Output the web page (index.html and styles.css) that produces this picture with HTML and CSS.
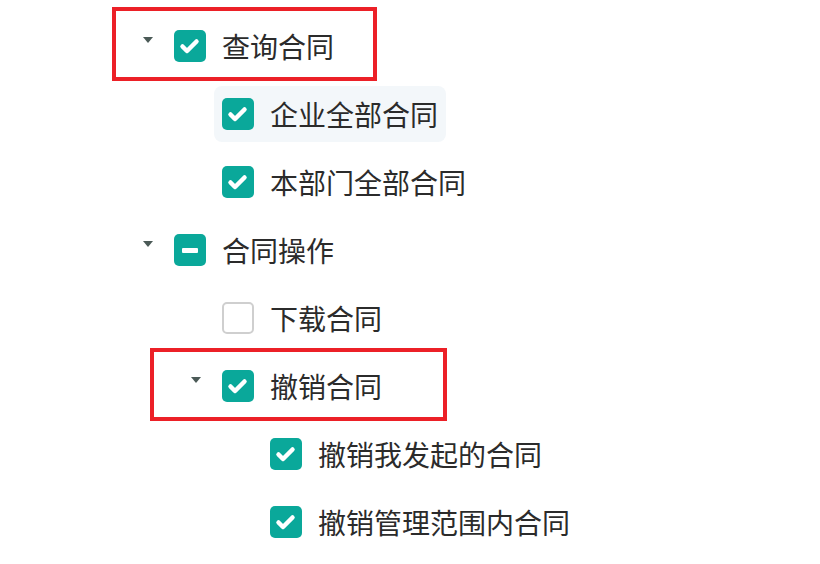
FILE: index.html
```html
<!DOCTYPE html>
<html lang="zh-CN">
<head>
    <meta charset="UTF-8">
    <meta name="viewport" content="width=device-width, initial-scale=1.0">
    <title>合同权限</title>
    <link rel="stylesheet" href="styles.css">
</head>
<body>
    <div class="tree">
        <div class="node">
            <span class="switcher"><i class="caret"></i></span>
            <div class="node-content">
                <span class="check checked"><svg viewBox="0 0 32 32"><path d="M8.5 16.5l4.5 4.5 9.5-9.5"/></svg></span>
                <span class="title">查询合同</span>
            </div>
        </div>
        <div class="node">
            <span class="indent"></span>
            <span class="switcher"></span>
            <div class="node-content active">
                <span class="check checked"><svg viewBox="0 0 32 32"><path d="M8.5 16.5l4.5 4.5 9.5-9.5"/></svg></span>
                <span class="title">企业全部合同</span>
            </div>
        </div>
        <div class="node">
            <span class="indent"></span>
            <span class="switcher"></span>
            <div class="node-content">
                <span class="check checked"><svg viewBox="0 0 32 32"><path d="M8.5 16.5l4.5 4.5 9.5-9.5"/></svg></span>
                <span class="title">本部门全部合同</span>
            </div>
        </div>
        <div class="node">
            <span class="switcher"><i class="caret"></i></span>
            <div class="node-content">
                <span class="check half"></span>
                <span class="title">合同操作</span>
            </div>
        </div>
        <div class="node">
            <span class="indent"></span>
            <span class="switcher"></span>
            <div class="node-content">
                <span class="check"></span>
                <span class="title">下载合同</span>
            </div>
        </div>
        <div class="node">
            <span class="indent"></span>
            <span class="switcher"><i class="caret"></i></span>
            <div class="node-content">
                <span class="check checked"><svg viewBox="0 0 32 32"><path d="M8.5 16.5l4.5 4.5 9.5-9.5"/></svg></span>
                <span class="title">撤销合同</span>
            </div>
        </div>
        <div class="node">
            <span class="indent"></span>
            <span class="indent"></span>
            <span class="switcher"></span>
            <div class="node-content">
                <span class="check checked"><svg viewBox="0 0 32 32"><path d="M8.5 16.5l4.5 4.5 9.5-9.5"/></svg></span>
                <span class="title">撤销我发起的合同</span>
            </div>
        </div>
        <div class="node">
            <span class="indent"></span>
            <span class="indent"></span>
            <span class="switcher"></span>
            <div class="node-content">
                <span class="check checked"><svg viewBox="0 0 32 32"><path d="M8.5 16.5l4.5 4.5 9.5-9.5"/></svg></span>
                <span class="title">撤销管理范围内合同</span>
            </div>
        </div>

        <!-- annotation marks -->
        <div class="mark mark-query"></div>
        <div class="mark mark-revoke"></div>
    </div>
</body>
</html>
```

FILE: styles.css
```css
body {
    margin: 0;
    background: #fff;
    font-family: "Noto Sans CJK SC", "Noto Sans", sans-serif;
    color: #2b2b2b;
}
.tree {
    position: relative;
    padding: 18px 0 0 130px;
    display: flex;
    flex-direction: column;
    gap: 12px;
}
.node {
    display: flex;
    height: 56px;
}
.indent {
    width: 48px;
    flex-shrink: 0;
}
.switcher {
    width: 36px;
    flex-shrink: 0;
    display: flex;
    justify-content: center;
    padding-top: 19px;
    box-sizing: border-box;
}
.caret {
    width: 0;
    height: 0;
    border-left: 5px solid transparent;
    border-right: 5px solid transparent;
    border-top: 6px solid #4b5a57;
}
.node-content {
    display: flex;
    align-items: center;
    padding: 0 8px;
    border-radius: 8px;
}
.node-content.active {
    background: #f3f7fa;
}
.check {
    width: 32px;
    height: 32px;
    box-sizing: border-box;
    border: 2px solid #cfcfcf;
    border-radius: 5px;
    background: #fff;
    margin-right: 16px;
    display: flex;
    align-items: center;
    justify-content: center;
    flex-shrink: 0;
}
.check.checked,
.check.half {
    border: none;
    background: #0aa89a;
}
.check svg {
    width: 32px;
    height: 32px;
}
.check svg path {
    fill: none;
    stroke: #fff;
    stroke-width: 4.5;
    stroke-linecap: round;
    stroke-linejoin: round;
}
.check.half::after {
    content: "";
    width: 16px;
    height: 5px;
    border-radius: 1px;
    background: #fff;
}
.title {
    font-size: 28px;
    line-height: 56px;
    white-space: nowrap;
}
.mark {
    position: absolute;
    border: 4px solid #ec2027;
    box-sizing: border-box;
}
.mark-query {
    left: 112px;
    top: 7px;
    width: 265px;
    height: 74px;
}
.mark-revoke {
    left: 150px;
    top: 348px;
    width: 297px;
    height: 73px;
}
```
